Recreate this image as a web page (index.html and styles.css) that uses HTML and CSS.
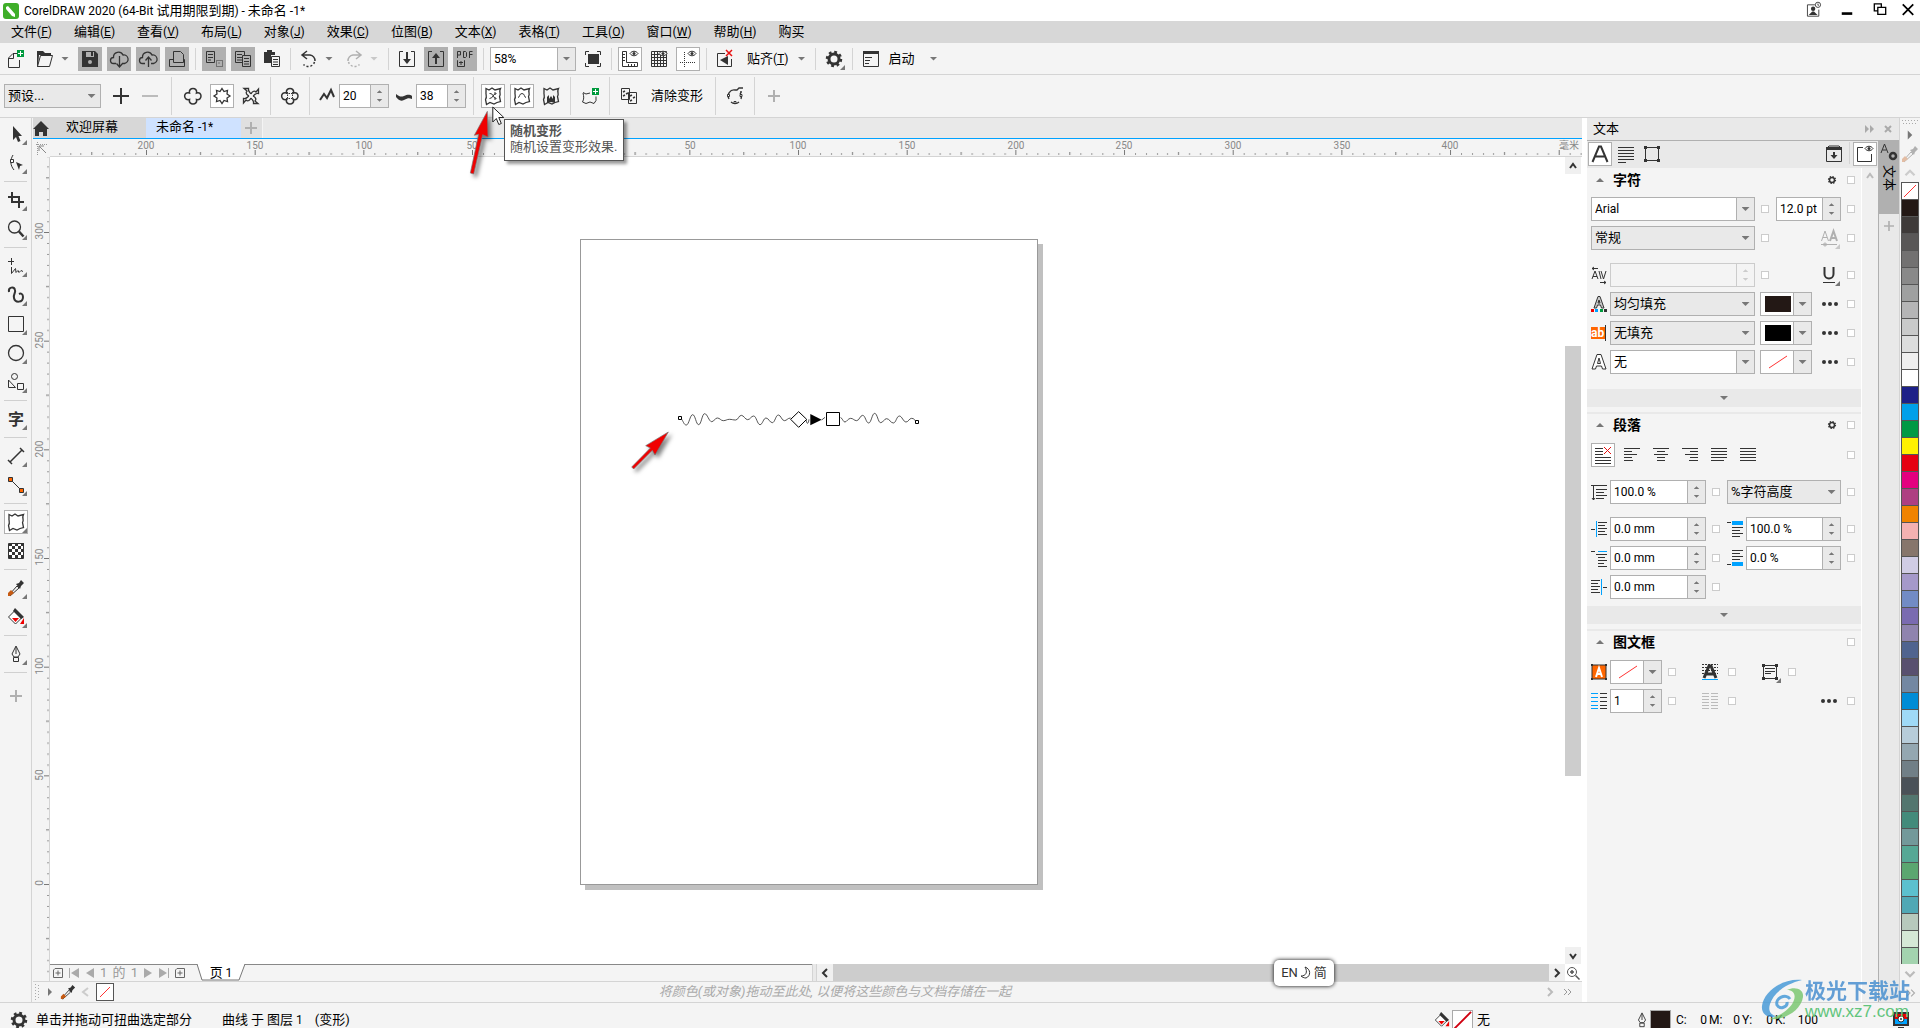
FILE: index.html
```html
<!DOCTYPE html>
<html lang="zh-CN">
<head>
<meta charset="utf-8">
<title>CorelDRAW 2020 - 未命名 -1*</title>
<link rel="stylesheet" href="styles.css">
</head>
<body>
<svg class="sprite" aria-hidden="true">
  <symbol id="fly" viewBox="0 0 24 24"><path d="M23 18v5h-5z" fill="#777"/></symbol>
  <symbol id="new" viewBox="0 0 24 24"><path d="M14 6.500H9L4.500 11v9.500h11V13M9.500 7v4.500H5" class="s"/><path d="M13 3h7v7h-7z" fill="#009a3d"/><path d="M16.500 4v5M14 6.500h5" stroke="#fff"/></symbol>
  <symbol id="open" viewBox="0 0 24 24"><path d="M4 4h6l2 2h6v3h-1V8H6L5 20H4z" class="f"/><path d="M7.500 8.500h12l-3 11h-12z" class="s" fill="#f4f4f4"/></symbol>
  <symbol id="save" viewBox="0 0 24 24"><path d="M4 4h13l3 3v13H4z" class="f"/><path d="M8 5h8v5H8z" fill="#b0b0b0"/><path d="M13 5h2v4h-2z" class="f"/><circle cx="12" cy="15" r="2" fill="#b0b0b0"/></symbol>
  <symbol id="clouddown" viewBox="0 0 24 24"><path d="M9 16.500H6.500a3 3 0 0 1 0-6 5 5 0 0 1 9.500-2.500 4 4 0 0 1 1.500 8.500H15M12.500 9v10M9.500 16.500l3 3.500 3-3.500" class="s" stroke-width="1.300"/></symbol>
  <symbol id="cloudup" viewBox="0 0 24 24"><path d="M9 16.500H6.500a3 3 0 0 1 0-6 5 5 0 0 1 9.500-2.500 4 4 0 0 1 1.500 8.500H15M12.500 20v-9M9.500 13.500l3-3.500 3 3.500" class="s" stroke-width="1.300"/></symbol>
  <symbol id="print" viewBox="0 0 24 24"><path d="M8.500 14V4.500h7l3 3V14M4.500 12.500h4v3h10v-3h1v7h-15z" class="s"/></symbol>
  <symbol id="cut" viewBox="0 0 24 24"><path d="M4.500 4.500h8v11h-8zM6 7.500h5M6 10.500h5M6 13h3" class="s"/><path d="M14.500 13.500h6v6h-6zM16.500 16h2" class="s" stroke-dasharray="1 1"/></symbol>
  <symbol id="copy" viewBox="0 0 24 24"><path d="M4.500 4.500h9v11h-9zM6 7.500h5M6 10.500h5M6 13h5" class="s"/><path d="M11.500 8.500h8v11h-8z" class="s" fill="#b0b0b0"/><path d="M13 11.500h5M13 14.500h5M13 17h5" class="s"/></symbol>
  <symbol id="paste" viewBox="0 0 24 24"><path d="M4 5h3V3h5v2h3v3h-4v8H4z" class="f"/><path d="M11.500 9.500h8v10h-8zM13 12.500h5M13 15h5M13 17.500h5" class="s" fill="#f4f4f4"/></symbol>
  <symbol id="undo" viewBox="0 0 24 24"><path d="M10 4L5 8l5 4M5 8h8a6 6 0 0 1 5 6" class="s" stroke-width="1.500"/><path d="M17.500 15a6.500 6.500 0 0 1-11 2.500" class="s" stroke-width="1.500" stroke-dasharray="2 2"/></symbol>
  <symbol id="import" viewBox="0 0 24 24"><path d="M8 4.500H4.500v15h15v-15H16" class="s"/><path d="M12 5v8" class="s2"/><path d="M8 12h8l-4 5z" class="f"/></symbol>
  <symbol id="export" viewBox="0 0 24 24"><path d="M8 4.500H4.500v15h15v-15H16" class="s"/><path d="M12 17V9" class="s2"/><path d="M8 11h8l-4-5z" class="f"/></symbol>
  <symbol id="pdf" viewBox="0 0 24 24"><path d="M4.500 11V4.500h3v3.500h-3M10.500 4.500v6h2l1-1v-4l-1-1zM19.500 4.500h-3V11M16.500 7.500h3" class="s"/><path d="M5 13.500h-.5v6h7v-6H11M8 18v-4M6 15.500h4" class="s"/></symbol>
  <symbol id="full" viewBox="0 0 24 24"><path d="M7 7h11v10H7z" class="f"/><path d="M4.500 8V4.500H8M16 4.500h3.500V8M4.500 16v3.500H8M16 19.500h3.500V16" class="s"/></symbol>
  <symbol id="eye" viewBox="0 0 24 24"><path d="M12 6.500c2-3 6-3 8 0-2 3-6 3-8 0z" class="s" fill="#fff"/><circle cx="16" cy="6.500" r="1.500" class="f"/></symbol>
  <symbol id="rulers" viewBox="0 0 24 24"><path d="M4.500 4.500h4v11h11v4h-15zM5 7.500h2M5 10.500h2M5 13.500h2M10.500 19v-2M13.500 19v-2M16.500 19v-2" class="s"/><use href="#eye"/></symbol>
  <symbol id="grid" viewBox="0 0 24 24"><path d="M4.500 4.500h15v15h-15zM7.500 4v16M10.500 4v16M13.500 4v16M16.500 4v16M4 7.500h16M4 10.500h16M4 13.500h16M4 16.500h16" class="s"/><use href="#eye"/></symbol>
  <symbol id="guides" viewBox="0 0 24 24"><path d="M8.500 5v16M4 15.500h16" class="s" stroke-dasharray="1 1"/><use href="#eye"/></symbol>
  <symbol id="snap" viewBox="0 0 24 24"><path d="M12 6.500H4.500v13h14V12" class="s"/><path d="M15 9v9l-8-5z" class="f"/><path d="M13 3l6 6M19 3l-6 6" stroke="#e81010" stroke-width="1.500"/></symbol>
  <symbol id="gear" viewBox="0 0 24 24"><circle cx="12" cy="12" r="5" fill="none" stroke="#333" stroke-width="3"/><circle cx="12" cy="12" r="7" fill="none" stroke="#333" stroke-width="2.500" stroke-dasharray="2.750 2.750"/></symbol>
  <symbol id="launch" viewBox="0 0 24 24"><path d="M4.500 4.500h15v15h-15zM6 10.500h7M6 13.500h5M6 16.500h4" class="s"/><path d="M4 4h16v3H4z" class="f"/></symbol>
  <symbol id="plus" viewBox="0 0 24 24"><path d="M12 4v16M4 12h16" class="s2"/></symbol>
  <symbol id="minus" viewBox="0 0 24 24"><path d="M4 12h16" stroke="#bbb" stroke-width="2"/></symbol>
  <symbol id="plusg" viewBox="0 0 24 24"><path d="M12 6v12M6 12h12" stroke="#b0b0b0" stroke-width="2"/></symbol>
  <symbol id="clover" viewBox="0 0 24 24"><path d="M8.500 9C7 3 17 3 15.500 9c6-2 6 8 0 6.500 1.500 6-8.500 6-7 0C2 17 2 7 8.500 9z" class="s" stroke-width="1.500"/></symbol>
  <symbol id="zip" viewBox="0 0 24 24"><path d="M12 4.500l2 3 3.500-1-.5 3.500 3 2-3 2 .5 3.500-3.500-1-2 3-2-3-3.500 1 .5-3.500-3-2 3-2L6.500 6.500l3.500 1z" class="s" stroke-width="1.300"/></symbol>
  <symbol id="twist" viewBox="0 0 24 24"><g class="s" stroke-width="1.300"><path d="M12 10C11 8 9 8 9.500 4.500H5L8 7C6 9 8 11 10 12"/><path d="M12 10C11 8 9 8 9.500 4.500H5L8 7C6 9 8 11 10 12" transform="rotate(90 12 12)"/><path d="M12 10C11 8 9 8 9.500 4.500H5L8 7C6 9 8 11 10 12" transform="rotate(180 12 12)"/><path d="M12 10C11 8 9 8 9.500 4.500H5L8 7C6 9 8 11 10 12" transform="rotate(270 12 12)"/></g></symbol>
  <symbol id="centre" viewBox="0 0 24 24"><use href="#clover"/><path d="M8 9.500h8M8 14.500h8M9.500 8v8M14.500 8v8" class="s" stroke-dasharray="1.500 1"/></symbol>
  <symbol id="amp" viewBox="0 0 16 24"><path d="M1 16l4-6 3 4 4-8 3 7" class="s2"/></symbol>
  <symbol id="freq" viewBox="0 0 16 24"><path d="M0 10c4 3 5 3 8 2s5-2 8 0v3c-3-1-4-1-8 1S2 15 0 13z" class="f"/></symbol>
  <symbol id="blob" viewBox="0 0 24 24"><path d="M5 4.500l3 1.500 3-2 3 2 5.500-1.500c-2 4 1 5-1 8l1 5-3.500 1-3 1.500-4-1.500-3.500 2-1-5c2-3 0-5 .5-7z" class="s" stroke-width="1.300"/></symbol>
  <symbol id="random" viewBox="0 0 24 24"><use href="#blob"/><path d="M8.500 9.500c5 0 3 5 7 5M8.500 14.500c4 0 3-5 7-5M14 8v3M14 13v3" class="s"/></symbol>
  <symbol id="smooth" viewBox="0 0 24 24"><use href="#blob"/><path d="M8 13.500c2 0 1-4 4-4s2 4 4 4" class="s"/></symbol>
  <symbol id="local" viewBox="0 0 24 24"><use href="#blob"/><path d="M8 19v-6l2-2v4l2-3 2 3v-4l2 2v6l-4-1z" class="f"/></symbol>
  <symbol id="addblob" viewBox="0 0 24 24"><path d="M5 8.500l3 1.500 4-1M5 9c1 4 1 6-.5 9l3.500 1.500 4-1.500 4 1.500 2-3v-4" class="s"/><path d="M14 4h7v7h-7z" fill="#009a3d"/><path d="M17.500 5v5M15 7.500h5" stroke="#fff"/></symbol>
  <symbol id="copyfx" viewBox="0 0 24 24"><path d="M4.500 4.500h8v11h-8zM11.500 8.500h8v11h-8z" class="s" fill="#f4f4f4"/><path d="M6 8l2-1M9 10l2-1M6 12l2-1M13 12l2-1M16 14l2-1M13 17l2-1" class="s" stroke-width="1.500"/></symbol>
  <symbol id="curves" viewBox="0 0 24 24"><path d="M12 6a6 6 0 0 0-6 9M8 18a6 6 0 0 0 8 0M18 15a6 6 0 0 0-1-6M11 6h3l2-2h4M17 8h2" class="s" stroke-width="1.300"/><path d="M4.500 10.500h2v2h-2zM11 17.500h2v2h-2zM17 10.500h2v2h-2z" class="s" fill="#fff"/></symbol>
  <symbol id="pick" viewBox="0 0 24 24"><path d="M9 4v14l3-3 2 5 2.500-1-2-5H18z" class="f"/></symbol>
  <symbol id="shape" viewBox="0 0 24 24"><path d="M9 4c-3 5-3 10 1 15" class="s"/><path d="M6.500 8.500h3v3h-3z" class="s" fill="#fff"/><path d="M12 11l7 3-3 1-1 4z" class="f"/></symbol>
  <symbol id="crop" viewBox="0 0 24 24"><path d="M8 4v10h11M4 9h11v11M11 14h9" class="s2"/></symbol>
  <symbol id="zoom" viewBox="0 0 24 24"><circle cx="10.500" cy="10" r="6" class="s" stroke-width="1.300"/><path d="M15 14.500l4.500 5" stroke="#333" stroke-width="2.500"/></symbol>
  <symbol id="free" viewBox="0 0 24 24"><path d="M4 7.500h6M7.500 4v7M7.500 13v6.500l4-5 .5 4 2-2 1 2 2-2 2 1" class="s"/></symbol>
  <symbol id="art" viewBox="0 0 24 24"><path d="M5 9c-1-5 5-6 6-2 1 3-2 4-1 8 1 5 9 5 9-1 0-3-2-4-4-3" class="s2"/></symbol>
  <symbol id="rect" viewBox="0 0 24 24"><path d="M4.500 4.500h15v15h-15z" class="s"/></symbol>
  <symbol id="oval" viewBox="0 0 24 24"><circle cx="12" cy="12" r="7.500" class="s" stroke-width="1.300"/></symbol>
  <symbol id="shapes" viewBox="0 0 24 24"><circle cx="10.500" cy="6.500" r="3" class="s"/><path d="M4.500 10v7.500h7zM13.500 13.500h6v6h-6z" class="s"/></symbol>
  <symbol id="dim" viewBox="0 0 24 24"><path d="M6 18L18 6M4 16l4 4M16 4l4 4" class="s" stroke-width="1.500"/></symbol>
  <symbol id="connect" viewBox="0 0 24 24"><path d="M6 6l12 12" class="s"/><path d="M4.500 4.500h4v4h-4zM15.500 15.500h4v4h-4z" fill="#ff6600" stroke="#333"/></symbol>
  <symbol id="checker" viewBox="0 0 24 24"><path d="M4.500 4.500h15v15h-15z" class="s" fill="#fff"/><path d="M6.500 4v16M12.500 4v16" stroke="#333" stroke-width="3" stroke-dasharray="3 3"/><path d="M9.500 7v13M15.500 7v13M18.500 4v16" stroke="#333" stroke-width="3" stroke-dasharray="3 3"/></symbol>
  <symbol id="dropper" viewBox="0 0 24 24"><path d="M5 19l8-9 2 2-9 8z" class="s"/><path d="M4 17l3-3 3 3-4 3H4z" fill="#c65a12"/><path d="M12 8l3-1 2-3 3 3-3 3-1 3z" class="f"/></symbol>
  <symbol id="bucket" viewBox="0 0 24 24"><path d="M11 5.500L4.500 12l7 7 7-7z" class="s" fill="#fff"/><path d="M11 3l9 9-3 2-8-8z" class="f"/><path d="M8 13h7l-3.500 4z" fill="#e00"/><path d="M20 13v6h-4z" fill="#e00"/></symbol>
  <symbol id="pen" viewBox="0 0 24 24"><path d="M12 4l-4 8 2 3h4l2-3zM9.500 15.500h5v4h-5zM12 5v7" class="s"/></symbol>
  <symbol id="account" viewBox="0 0 24 24"><path d="M13 5.500H4.500v13h13V11" class="s"/><circle cx="11" cy="10" r="2.500" class="f"/><path d="M6 17l4-4h2l4 4z" class="f"/><circle cx="16.500" cy="5.500" r="3" class="s"/><path d="M16.500 4v2h1" class="s"/></symbol>
  <symbol id="textA" viewBox="0 0 24 24"><path d="M4.500 20L11 4.500h2L19.500 20M7 14.500h10" class="s2"/></symbol>
  <symbol id="lines" viewBox="0 0 24 24"><path d="M4 5.500h16M4 8.500h16M4 11.500h16M4 14.500h16M4 17.500h16" class="s"/><path d="M4 20.500h8" class="s"/></symbol>
  <symbol id="frame" viewBox="0 0 24 24"><path d="M5.500 5.500h13v13h-13z" class="s"/><path d="M4 4h3v3H4zM17 4h3v3h-3zM4 17h3v3H4zM17 17h3v3h-3z" class="f"/></symbol>
  <symbol id="dock" viewBox="0 0 24 24"><path d="M4.500 8v11.500h15V8M4 7l3-3h10l3 3z" class="s"/><path d="M4 5h16v3H4z" class="f"/><path d="M12 10v4" class="s2"/><path d="M8.500 13h7L12 17z" class="f"/></symbol>
  <symbol id="panel" viewBox="0 0 24 24"><path d="M10 5.500H4.500v14h14V12" class="s"/><use href="#eye"/></symbol>
  <symbol id="AA" viewBox="0 0 24 24"><path d="M4.500 15L8 5l3.500 10M6 11.500h4" class="s"/><path d="M13 15l3.500-10L20 15M14.500 12h4" class="s2"/><path d="M4 18.500h16" class="s"/><circle cx="8" cy="18.500" r="1.500" class="s"/></symbol>
  <symbol id="U" viewBox="0 0 24 24"><path d="M7.500 4v7c0 6 9 6 9 0V4" class="s2"/><path d="M6 19.500h12" class="s"/></symbol>
  <symbol id="kern" viewBox="0 0 16 24"><path d="M1 5.500h6M3 4L1 5.500 3 7M1 16l3-8 3 8M2 13.500h4M8 8l2 8M10 8l2.500 8 2.500-8M9 19.500h6M13 18l2 1.500L13 21" class="s"/></symbol>
  <symbol id="Ac" viewBox="0 0 16 24"><path d="M3 16L7 4.500h2L13 16h-2.500l-1-3h-3l-1 3zM7 11h2L8 8z" class="s" fill="#ccc"/><path d="M0 17h3v3H0z" fill="#e00"/><path d="M4 17h3v3H4z" fill="#00a2ff"/><path d="M9 17h3v3H9z" fill="#009a3d"/><path d="M13 17h3v3h-3z" class="f"/></symbol>
  <symbol id="ab" viewBox="0 0 16 24"><path d="M0 6h14v12H0z" fill="#ff6600"/><path d="M14.500 4v16" class="s"/><text x="0" y="16" font-size="12" font-weight="bold" fill="#fff">ab</text></symbol>
  <symbol id="Ao" viewBox="0 0 16 24"><path d="M1 19L6 4.500h4L15 19h-3.500l-1-3h-5l-1 3zM6.500 13.500h3L8 8z" class="s" fill="#fff"/></symbol>
  <symbol id="more" viewBox="0 0 24 24"><circle cx="6" cy="12" r="2" class="f"/><circle cx="12" cy="12" r="2" class="f"/><circle cx="18" cy="12" r="2" class="f"/></symbol>
  <symbol id="noal" viewBox="0 0 24 24"><path d="M4 5.500h8M4 8.500h8M4 11.500h8M4 14.500h16M4 17.500h16M4 20.500h16" class="s"/><path d="M13 4l7 7M20 4l-7 7" stroke="#e81010"/></symbol>
  <symbol id="al" viewBox="0 0 24 24"><path d="M4 5.500h16M4 8.500h8M4 11.500h13M4 14.500h8M4 17.500h9" class="s"/></symbol>
  <symbol id="ac" viewBox="0 0 24 24"><path d="M4 5.500h16M8 8.500h8M5 11.500h14M8 14.500h8M8 17.500h8" class="s"/></symbol>
  <symbol id="ar" viewBox="0 0 24 24"><path d="M4 5.500h16M12 8.500h8M7 11.500h13M12 14.500h8M11 17.500h9" class="s"/></symbol>
  <symbol id="aj" viewBox="0 0 24 24"><path d="M4 5.500h16M4 8.500h16M4 11.500h16M4 14.500h16M4 17.500h13" class="s"/></symbol>
  <symbol id="af" viewBox="0 0 24 24"><path d="M4 5.500h16M4 8.500h16M4 11.500h16M4 14.500h16M4 17.500h16" class="s"/></symbol>
  <symbol id="lead" viewBox="0 0 16 24"><path d="M2.500 5v15M0 5.500h16M1 18l1.500 2L4 18M5 9.500h11M5 12.500h8M5 15.500h11M5 18.500h8" class="s"/></symbol>
  <symbol id="indl" viewBox="0 0 16 24"><path d="M0 12.500h4M7 5.500h9M7 8.500h7M7 11.500h9M7 14.500h7M7 17.500h9" class="s"/><path d="M5.500 4v16" stroke="#00a2ff"/></symbol>
  <symbol id="indf" viewBox="0 0 16 24"><path d="M0 5.500h4M5 8.500h11M7 11.500h7M7 14.500h9M7 17.500h6M7 20.500h9" class="s"/><path d="M7 5.500h9" stroke="#00a2ff"/></symbol>
  <symbol id="indr" viewBox="0 0 16 24"><path d="M12 12.500h4M0 5.500h9M0 8.500h7M0 11.500h9M0 14.500h7M0 17.500h9" class="s"/><path d="M10.500 4v16" stroke="#00a2ff"/></symbol>
  <symbol id="bef" viewBox="0 0 16 24"><path d="M0 5.500h4M5 10.500h11M5 13.500h8M5 16.500h11M5 19.500h8" class="s"/><path d="M5 4h11v4H5z" fill="#00a2ff"/></symbol>
  <symbol id="aft" viewBox="0 0 16 24"><path d="M0 18.500h4M5 4.500h11M5 7.500h8M5 10.500h11M5 13.500h8" class="s"/><path d="M5 16h11v4H5z" fill="#00a2ff"/></symbol>
  <symbol id="Af" viewBox="0 0 16 24"><path d="M1 5h14v14H1z" fill="#ff6600" stroke="#333"/><path d="M5 17L8 8l3 9M6 14h4" fill="none" stroke="#fff" stroke-width="2"/><path d="M0 4h2v2H0zM14 4h2v2h-2zM0 18h2v2H0zM14 18h2v2h-2z" class="f"/></symbol>
  <symbol id="cols" viewBox="0 0 16 24"><path d="M9 4.500h7M9 8.500h7M9 12.500h7M9 16.500h7M9 19.500h7" class="s"/><path d="M0 4.500h7M0 8.500h7M0 12.500h7M0 16.500h7M0 19.500h7" stroke="#00a2ff"/></symbol>
  <symbol id="Ab" viewBox="0 0 24 24"><path d="M6 18L11 6h2l5 12M8 14h8" class="s" stroke-width="3"/><path d="M4 4.500h16M4 7.500h16M4 10.500h16M4 13.500h16" class="s" stroke-dasharray="2 1"/><path d="M4 19.500h16" stroke="#00a2ff"/></symbol>
  <symbol id="cols2" viewBox="0 0 24 24"><path d="M4 4.500h7M4 7.500h7M4 10.500h7M4 13.500h7M4 16.500h7M4 19.500h7M13 4.500h7M13 7.500h7M13 10.500h7M13 13.500h7M13 16.500h7M13 19.500h7" stroke="#bbb"/></symbol>
  <symbol id="ftop" viewBox="0 0 24 24"><use href="#frame"/><path d="M7 8.500h10M7 11.500h10M7 13.500h6" class="s"/></symbol>
  <symbol id="addpage" viewBox="0 0 16 16"><path d="M5 3.500h7.500v9h-9V5zM8 5.500v5M5.500 8h5" fill="none" stroke="#666"/></symbol>
</svg>

<div class="app">
  <header class="title">
    <svg class="logo" viewBox="0 0 16 16"><rect width="16" height="16" rx="3" fill="#3fae29"/><path d="M3 4l2-1 7 8v3l-3-1L3 6z" fill="#fff"/></svg>
    <h1>CorelDRAW 2020 (64-Bit <span class="zh">试用期限到期</span>) - <span class="zh">未命名</span> -1*</h1>
    <button class="win" aria-label="帐户"><svg><use href="#account"/></svg></button>
    <button class="win" aria-label="最小化"><svg viewBox="0 0 24 24"><path d="M6 15.500h12" stroke="#000" stroke-width="3"/></svg></button>
    <button class="win" aria-label="还原"><svg viewBox="0 0 24 24"><path d="M9 12.500H5.500v-8h8V8M9.500 8.500h9v8h-9z" fill="none" stroke="#000" stroke-width="1.500"/></svg></button>
    <button class="win" aria-label="关闭"><svg viewBox="0 0 24 24"><path d="M6 5l12 12M18 5L6 17" stroke="#000" stroke-width="2"/></svg></button>
  </header>

  <nav class="menu">
    <button><span class="zh">文件</span>(<u>F</u>)</button><button><span class="zh">编辑</span>(<u>E</u>)</button><button><span class="zh">查看</span>(<u>V</u>)</button><button><span class="zh">布局</span>(<u>L</u>)</button><button><span class="zh">对象</span>(<u>J</u>)</button><button><span class="zh">效果</span>(<u>C</u>)</button><button><span class="zh">位图</span>(<u>B</u>)</button><button><span class="zh">文本</span>(<u>X</u>)</button><button><span class="zh">表格</span>(<u>T</u>)</button><button><span class="zh">工具</span>(<u>O</u>)</button><button><span class="zh">窗口</span>(<u>W</u>)</button><button><span class="zh">帮助</span>(<u>H</u>)</button><button><span class="zh">购买</span></button>
  </nav>

  <div class="bar standard">
    <button class="b" aria-label="新建"><svg><use href="#new"/></svg></button>
    <span class="split"><button class="b" aria-label="打开"><svg><use href="#open"/></svg></button><button class="caret" aria-label="最近文件"></button></span>
    <button class="b dark" aria-label="保存"><svg><use href="#save"/></svg></button>
    <button class="b dark" aria-label="从云下载"><svg><use href="#clouddown"/></svg></button>
    <button class="b dark" aria-label="上传到云"><svg><use href="#cloudup"/></svg></button>
    <button class="b dark" aria-label="打印"><svg><use href="#print"/></svg></button>
    <i class="sep"></i>
    <button class="b dark" aria-label="剪切"><svg><use href="#cut"/></svg></button>
    <button class="b dark" aria-label="复制"><svg><use href="#copy"/></svg></button>
    <button class="b" aria-label="粘贴"><svg><use href="#paste"/></svg></button>
    <i class="sep"></i>
    <span class="split"><button class="b" aria-label="撤销"><svg><use href="#undo"/></svg></button><button class="caret" aria-label="撤销列表"></button></span>
    <span class="split off"><button class="b flip" aria-label="重做"><svg><use href="#undo"/></svg></button><button class="caret" aria-label="重做列表"></button></span>
    <i class="sep"></i>
    <button class="b" aria-label="导入"><svg><use href="#import"/></svg></button>
    <button class="b dark" aria-label="导出"><svg><use href="#export"/></svg></button>
    <button class="b dark" aria-label="发布为 PDF"><svg><use href="#pdf"/></svg></button>
    <i class="sep"></i>
    <span class="sel edit zoomlevel"><select aria-label="缩放级别"><option>58%</option></select></span>
    <button class="b" aria-label="全屏预览"><svg><use href="#full"/></svg></button>
    <i class="sep"></i>
    <button class="b on" aria-label="显示标尺"><svg><use href="#rulers"/></svg></button>
    <button class="b" aria-label="显示网格"><svg><use href="#grid"/></svg></button>
    <button class="b on" aria-label="显示辅助线"><svg><use href="#guides"/></svg></button>
    <i class="sep"></i>
    <button class="b" aria-label="关闭贴齐"><svg><use href="#snap"/></svg></button>
    <span class="split"><button class="lbl pad"><span class="zh">贴齐</span>(<u>T</u>)</button><button class="caret" aria-label="贴齐选项"></button></span>
    <i class="sep"></i>
    <button class="b" aria-label="选项"><svg><use href="#gear"/><use href="#fly"/></svg></button>
    <i class="sep"></i>
    <button class="b" aria-label="应用程序启动器"><svg><use href="#launch"/></svg></button>
    <button class="lbl"><span class="zh">启动</span></button>
    <button class="caret" aria-label="启动列表"></button>
  </div>

  <div class="bar property">
    <span class="sel preset"><select class="zh" aria-label="预设"><option>预设...</option></select></span>
    <button class="b" aria-label="添加预设"><svg><use href="#plus"/></svg></button>
    <button class="b" aria-label="删除预设"><svg><use href="#minus"/></svg></button>
    <i class="sep wide"></i>
    <button class="b" aria-label="推拉变形"><svg><use href="#clover"/></svg></button>
    <button class="b on" aria-label="拉链变形"><svg><use href="#zip"/></svg></button>
    <button class="b" aria-label="扭曲变形"><svg><use href="#twist"/></svg></button>
    <i class="sep"></i>
    <button class="b" aria-label="居中变形"><svg><use href="#centre"/></svg></button>
    <i class="sep"></i>
    <label class="field"><svg><use href="#amp"/></svg><span class="spin"><input value="20" aria-label="拉链振幅"><span class="ud"><button aria-label="增加"></button><button aria-label="减少"></button></span></span></label>
    <label class="field"><svg><use href="#freq"/></svg><span class="spin"><input value="38" aria-label="拉链频率"><span class="ud"><button aria-label="增加"></button><button aria-label="减少"></button></span></span></label>
    <i class="sep"></i>
    <button class="b on" aria-label="随机变形"><svg><use href="#random"/></svg></button>
    <button class="b on" aria-label="平滑变形"><svg><use href="#smooth"/></svg></button>
    <button class="b" aria-label="局限变形"><svg><use href="#local"/></svg></button>
    <i class="sep"></i>
    <button class="b" aria-label="添加新的变形"><svg><use href="#addblob"/></svg></button>
    <i class="sep"></i>
    <button class="b" aria-label="复制变形属性"><svg><use href="#copyfx"/></svg></button>
    <button class="lbl pad"><span class="zh">清除变形</span></button>
    <i class="sep"></i>
    <button class="b" aria-label="转换为曲线"><svg><use href="#curves"/></svg></button>
    <i class="sep"></i>
    <button class="b" aria-label="自定义"><svg><use href="#plusg"/></svg></button>
  </div>

  <main class="main">
    <aside class="tools">
      <button class="b" aria-label="选择"><svg><use href="#pick"/><use href="#fly"/></svg></button>
      <button class="b" aria-label="形状"><svg><use href="#shape"/><use href="#fly"/></svg></button>
      <i class="hr"></i>
      <button class="b" aria-label="裁剪"><svg><use href="#crop"/><use href="#fly"/></svg></button>
      <button class="b" aria-label="缩放"><svg><use href="#zoom"/><use href="#fly"/></svg></button>
      <i class="hr"></i>
      <button class="b" aria-label="手绘"><svg><use href="#free"/><use href="#fly"/></svg></button>
      <button class="b" aria-label="艺术笔"><svg><use href="#art"/><use href="#fly"/></svg></button>
      <button class="b" aria-label="矩形"><svg><use href="#rect"/><use href="#fly"/></svg></button>
      <button class="b" aria-label="椭圆形"><svg><use href="#oval"/><use href="#fly"/></svg></button>
      <button class="b" aria-label="多边形"><svg><use href="#shapes"/><use href="#fly"/></svg></button>
      <i class="hr"></i>
      <button class="b" aria-label="文本"><svg viewBox="0 0 24 24"><text x="4" y="18" font-size="16" font-weight="bold" fill="#333">字</text><use href="#fly"/></svg></button>
      <i class="hr"></i>
      <button class="b" aria-label="平行度量"><svg><use href="#dim"/><use href="#fly"/></svg></button>
      <button class="b" aria-label="连接器"><svg><use href="#connect"/><use href="#fly"/></svg></button>
      <i class="hr"></i>
      <button class="b on" aria-label="变形"><svg><use href="#blob"/><use href="#fly"/></svg></button>
      <button class="b" aria-label="透明度"><svg><use href="#checker"/></svg></button>
      <i class="hr"></i>
      <button class="b" aria-label="颜色滴管"><svg><use href="#dropper"/><use href="#fly"/></svg></button>
      <button class="b" aria-label="交互式填充"><svg><use href="#bucket"/><use href="#fly"/></svg></button>
      <i class="hr"></i>
      <button class="b" aria-label="轮廓笔"><svg><use href="#pen"/><use href="#fly"/></svg></button>
      <i class="hr"></i>
      <button class="b last" aria-label="自定义工具箱"><svg><use href="#plusg"/></svg></button>
    </aside>

    <section class="doc">
      <div class="tabs">
        <button class="home" aria-label="主页"><svg viewBox="0 0 16 20"><path d="M8 3l8 8h-2v7h-4v-4H6v4H2v-7H0z" fill="#333"/></svg></button>
        <button class="tab zh">欢迎屏幕</button>
        <button class="tab cur"><span class="zh">未命名</span> -1*</button>
        <button class="tab add" aria-label="新建标签"><svg viewBox="0 0 20 20"><path d="M10 4v12M4 10h12" stroke="#b0b0b0" stroke-width="2"/></svg></button>
      </div>
      <div class="topruler">
        <svg class="corner" viewBox="0 0 17 17"><path d="M4.500 3v14M3 5.500h11" fill="none" stroke="#999" stroke-dasharray="1 1"/><path d="M6 7h5M6 7v5M6 7l7 7" fill="none" stroke="#888"/></svg>
        <svg class="hr-svg">
          <defs>
            <pattern id="ph" x="96" y="0" width="108.670" height="18" patternUnits="userSpaceOnUse">
              <path d="M.5 11v5M54.500 13v3" stroke="#777"/>
              <path d="M11.500 14v2M22.500 14v2M33.500 14v2M43.500 14v2M65.500 14v2M76.500 14v2M87.500 14v2M98.500 14v2" stroke="#999"/>
            </pattern>
          </defs>
          <rect width="100%" height="17" fill="url(#ph)"/>
          <g text-anchor="middle"><text x="96" y="10">200</text><text x="205" y="10">150</text><text x="314" y="10">100</text><text x="422" y="10">50</text><text x="640" y="10">50</text><text x="748" y="10">100</text><text x="857" y="10">150</text><text x="966" y="10">200</text><text x="1074" y="10">250</text><text x="1183" y="10">300</text><text x="1292" y="10">350</text><text x="1400" y="10">400</text><text x="1519" y="10">毫米</text></g>
        </svg>
      </div>
      <div class="work">
        <svg class="vruler">
          <defs>
            <pattern id="pv" x="0" y="75" width="17" height="108.670" patternUnits="userSpaceOnUse">
              <path d="M11 .5h5M13 54.500h3" stroke="#777"/>
              <path d="M14 11.500h2M14 22.500h2M14 33.500h2M14 43.500h2M14 65.500h2M14 76.500h2M14 87.500h2M14 98.500h2" stroke="#999"/>
            </pattern>
          </defs>
          <rect width="17" height="100%" fill="url(#pv)"/>
          <g text-anchor="middle"><text transform="translate(10 74) rotate(-90)">300</text><text transform="translate(10 183) rotate(-90)">250</text><text transform="translate(10 292) rotate(-90)">200</text><text transform="translate(10 400) rotate(-90)">150</text><text transform="translate(10 509) rotate(-90)">100</text><text transform="translate(10 618) rotate(-90)">50</text><text transform="translate(10 726) rotate(-90)">0</text></g>
        </svg>
        <div class="centre">
          <div class="view">
            <div class="canvas">
              <div class="page"></div>
              <svg class="curve" viewBox="345 90 735 60">
                <g fill="none" stroke="#333" stroke-width="2.500">
                  <path d="M363 116C370 122 371 135 379 135S390 104 398 104 408 134 416 134 426 101 434 101 447 125 455 125 464 114 472 114 482 122 490 122 500 118 508 118 519 120 527 120 536 106 544 106 555 119 563 119 573 108 581 108 592 134 600 134 610 114 618 114 629 128 637 128 647 105 655 105 665 122 673 122 682 114 692 114"/>
                  <path d="M738 118C740 134 745 134 747 118M785 120l10-8M842 112C850 120 850 126 855 126S864 115 872 115 882 122 890 122 900 106 908 106 918 129 926 129 936 100 944 100 954 128 962 128 972 116 980 116 992 129 1000 129 1010 108 1018 108 1030 126 1038 126 1047 115 1055 115 1065 122 1070 126"/>
                </g>
                <g fill="#fff" stroke="#000" stroke-width="3"><path d="M355.500 109.500h9v9h-9zM1066.500 121.500h9v9h-9zM716 95l24 23-24 24-24-24zM799.500 97.500h39v39h-39z"/><path d="M751 102l34 17-34 17z" fill="#000" stroke="none"/></g>
              </svg>
              <svg class="arrow2" viewBox="205 145 135 135"><path d="M216 262l56-57-14-7 68-41-40 69-8-14-56 56z" fill="#f00000" stroke="#777" stroke-width="2"/></svg>
            </div>
            <div class="vscroll"><button aria-label="向上滚动"><svg viewBox="0 0 16 16"><path d="M5 10l3-4 3 4" class="s2"/></svg></button><i class="thumb"></i><button aria-label="向下滚动"><svg viewBox="0 0 16 16"><path d="M5 6l3 4 3-4" class="s2"/></svg></button></div>
          </div>
          <div class="navrow">
            <div class="pages">
              <button aria-label="添加页"><svg><use href="#addpage"/></svg></button>
              <button aria-label="第一页"><svg viewBox="0 0 16 16"><path d="M3 3h1v10H3zM13 3v10L5 8z" fill="#aaa"/></svg></button>
              <button aria-label="上一页"><svg viewBox="0 0 16 16"><path d="M12 3v10L4 8z" fill="#aaa"/></svg></button>
              <span class="count"><span>1</span><span>的</span><span>1</span></span>
              <button aria-label="下一页"><svg viewBox="0 0 16 16"><path d="M4 3v10l8-5z" fill="#aaa"/></svg></button>
              <button aria-label="最后一页"><svg viewBox="0 0 16 16"><path d="M12 3h1v10h-1zM3 3v10l8-5z" fill="#aaa"/></svg></button>
              <button aria-label="添加页"><svg><use href="#addpage"/></svg></button>
              <button class="pagetab"><svg viewBox="0 0 50 17" aria-hidden="true"><path d="M1 0l5 16h37L49 0z" fill="#fff"/><path d="M1 0l5 16h37L49 0" fill="none" stroke="#777"/></svg><span><span class="zh">页</span> 1</span></button>
            </div>
            <i class="splitter"></i>
            <div class="hscroll"><button aria-label="向左滚动"><svg viewBox="0 0 16 16"><path d="M10 4L6 8l4 4" class="s2"/></svg></button><i class="thumb"></i><button aria-label="向右滚动"><svg viewBox="0 0 16 16"><path d="M6 4l4 4-4 4" class="s2"/></svg></button></div>
            <button class="navi" aria-label="导航器"><svg viewBox="0 0 16 16"><circle cx="7" cy="7" r="4.500" fill="none" stroke="#555"/><path d="M7 5v4M5 7h4M10.500 10.500l4 4" stroke="#555" stroke-width="1.500"/></svg></button>
          </div>
        </div>
      </div>
      <div class="docpal">
        <svg class="grip" viewBox="0 0 6 16"><path d="M1.500 0v16M4.500 1v16" stroke="#aaa" stroke-dasharray="1 2"/></svg>
        <button aria-label="菜单"><svg viewBox="0 0 16 16"><path d="M6 4l4 4-4 4z" fill="#777"/></svg></button>
        <button aria-label="滴管"><svg viewBox="3 3 18 18"><use href="#dropper" width="24" height="24"/></svg></button>
        <button aria-label="向左"><svg viewBox="0 0 16 16"><path d="M10 4L5 8l5 4" fill="none" stroke="#ccc" stroke-width="2"/></svg></button>
        <button class="nocol" aria-label="无颜色"><svg viewBox="0 0 16 16"><path d="M3 13L13 3" stroke="#f33"/></svg></button>
        <em>将颜色(或对象)拖动至此处, 以便将这些颜色与文档存储在一起</em>
        <button aria-label="向右"><svg viewBox="0 0 16 16"><path d="M6 4l4 4-4 4" fill="none" stroke="#bbb" stroke-width="2"/></svg></button>
        <button aria-label="更多颜色"><svg viewBox="0 0 16 16"><path d="M4 5l3 3-3 3M8 5l3 3-3 3" fill="none" stroke="#999"/></svg></button>
      </div>
    </section>

    <section class="docker">
      <div class="dhead"><h2 class="zh">文本</h2>
        <button aria-label="折叠"><svg viewBox="0 0 16 16"><path d="M4 4l4 4-4 4zM9 4l4 4-4 4z" fill="#aaa"/></svg></button>
        <button aria-label="关闭泊坞窗"><svg viewBox="0 0 16 16"><path d="M5 5l6 6M11 5l-6 6" stroke="#aaa" stroke-width="2"/></svg></button>
      </div>
      <div class="dbody">
        <div class="dleft">
          <div class="dtabs">
            <button class="b on" aria-label="字符"><svg><use href="#textA"/></svg></button>
            <button class="b" aria-label="段落"><svg><use href="#lines"/></svg></button>
            <button class="b" aria-label="图文框"><svg><use href="#frame"/></svg></button>
            <button class="b right" aria-label="停靠"><svg><use href="#dock"/></svg></button>
            <i class="sep"></i>
            <button class="b on" aria-label="显示"><svg><use href="#panel"/></svg></button>
          </div>
          <div class="dscroll">
            <div class="form">
              <div class="head first"><i class="tri"></i><h3>字符</h3><button class="mini" aria-label="字符选项"><svg viewBox="0 0 24 24"><use href="#gear"/></svg></button><input type="checkbox" aria-label="字符样式"></div>
              <div class="row"><span class="sel edit w164"><select aria-label="字体"><option>Arial</option></select></span><input type="checkbox" aria-label="字体样式"><span class="spin w65 end"><input value="12.0 pt" aria-label="字体大小"><span class="ud"><button aria-label="增加"></button><button aria-label="减少"></button></span></span><input type="checkbox" aria-label="大小样式"></div>
              <div class="row"><span class="sel w164"><select class="zh" aria-label="字体样式"><option>常规</option></select></span><input type="checkbox" aria-label="样式"><button class="b end off" aria-label="可变字体"><svg><use href="#AA"/><use href="#fly"/></svg></button><input type="checkbox" aria-label="可变样式"></div>
              <div class="row gapup"><label class="lead"><svg><use href="#kern"/></svg><span class="spin w145 dis"><input disabled aria-label="字距调整"><span class="ud"><button aria-label="增加" disabled></button><button aria-label="减少" disabled></button></span></span></label><input type="checkbox" aria-label="字距样式"><button class="b end" aria-label="下划线"><svg><use href="#U"/><use href="#fly"/></svg></button><input type="checkbox" aria-label="下划线样式"></div>
              <div class="row tight"><label class="lead"><svg><use href="#Ac"/></svg><span class="sel w145"><select class="zh" aria-label="填充类型"><option>均匀填充</option></select></span></label><button class="chip" aria-label="文本颜色"><i class="ink"></i></button><button class="b end" aria-label="填充设置"><svg><use href="#more"/></svg></button><input type="checkbox" aria-label="填充样式"></div>
              <div class="row tight"><label class="lead"><svg><use href="#ab"/></svg><span class="sel w145"><select class="zh" aria-label="背景填充类型"><option>无填充</option></select></span></label><button class="chip" aria-label="背景颜色"><i class="blk"></i></button><button class="b end" aria-label="背景设置"><svg><use href="#more"/></svg></button><input type="checkbox" aria-label="背景样式"></div>
              <div class="row tight"><label class="lead"><svg><use href="#Ao"/></svg><span class="sel edit w145"><select class="zh" aria-label="轮廓宽度"><option>无</option></select></span></label><button class="chip" aria-label="轮廓颜色"><svg viewBox="0 0 26 16"><path d="M4 14L22 2" stroke="#f33"/></svg></button><button class="b end" aria-label="轮廓设置"><svg><use href="#more"/></svg></button><input type="checkbox" aria-label="轮廓样式"></div>
              <button class="expand big" aria-label="展开字符"></button>

              <div class="head"><i class="tri"></i><h3>段落</h3><button class="mini" aria-label="段落选项"><svg viewBox="0 0 24 24"><use href="#gear"/></svg></button><input type="checkbox" aria-label="段落样式"></div>
              <div class="row al"><button class="b on" aria-label="无水平对齐"><svg><use href="#noal"/></svg></button><button class="b" aria-label="左对齐"><svg><use href="#al"/></svg></button><button class="b" aria-label="居中"><svg><use href="#ac"/></svg></button><button class="b" aria-label="右对齐"><svg><use href="#ar"/></svg></button><button class="b" aria-label="两端对齐"><svg><use href="#aj"/></svg></button><button class="b" aria-label="强制两端对齐"><svg><use href="#af"/></svg></button><input type="checkbox" class="end" aria-label="对齐样式"></div>
              <div class="row gapup"><label class="lead"><svg><use href="#lead"/></svg><span class="spin w96"><input value="100.0 %" aria-label="行间距"><span class="ud"><button aria-label="增加"></button><button aria-label="减少"></button></span></span></label><input type="checkbox" aria-label="行距样式"><span class="sel w114 end"><select class="zh" aria-label="垂直间距单位"><option>%字符高度</option></select></span><input type="checkbox" aria-label="单位样式"></div>
              <div class="row gapup"><label class="lead"><svg><use href="#indl"/></svg><span class="spin w96"><input value="0.0 mm" aria-label="左行缩进"><span class="ud"><button aria-label="增加"></button><button aria-label="减少"></button></span></span></label><input type="checkbox" aria-label="左缩进样式"><label class="lead end"><svg><use href="#bef"/></svg><span class="spin w95"><input value="100.0 %" aria-label="段前间距"><span class="ud"><button aria-label="增加"></button><button aria-label="减少"></button></span></span></label><input type="checkbox" aria-label="段前样式"></div>
              <div class="row"><label class="lead"><svg><use href="#indf"/></svg><span class="spin w96"><input value="0.0 mm" aria-label="首行缩进"><span class="ud"><button aria-label="增加"></button><button aria-label="减少"></button></span></span></label><input type="checkbox" aria-label="首行样式"><label class="lead end"><svg><use href="#aft"/></svg><span class="spin w95"><input value="0.0 %" aria-label="段后间距"><span class="ud"><button aria-label="增加"></button><button aria-label="减少"></button></span></span></label><input type="checkbox" aria-label="段后样式"></div>
              <div class="row"><label class="lead"><svg><use href="#indr"/></svg><span class="spin w96"><input value="0.0 mm" aria-label="右行缩进"><span class="ud"><button aria-label="增加"></button><button aria-label="减少"></button></span></span></label><input type="checkbox" aria-label="右缩进样式"></div>
              <button class="expand" aria-label="展开段落"></button>

              <div class="head"><i class="tri"></i><h3>图文框</h3><input type="checkbox" aria-label="图文框样式"></div>
              <div class="row"><label class="lead"><svg><use href="#Af"/></svg><button class="chip" aria-label="背景颜色"><svg viewBox="0 0 26 16"><path d="M4 14L22 2" stroke="#f33"/></svg></button></label><input type="checkbox" aria-label="背景样式"><button class="b sp" aria-label="对齐基线"><svg><use href="#Ab"/></svg></button><input type="checkbox" aria-label="基线样式"><button class="b sp" aria-label="垂直对齐"><svg><use href="#ftop"/><use href="#fly"/></svg></button><input type="checkbox" aria-label="垂直样式"></div>
              <div class="row"><label class="lead"><svg><use href="#cols"/></svg><span class="spin w52"><input value="1" aria-label="栏数"><span class="ud"><button aria-label="增加"></button><button aria-label="减少"></button></span></span></label><input type="checkbox" aria-label="栏样式"><button class="b sp" aria-label="栏宽相等"><svg><use href="#cols2"/></svg></button><input type="checkbox" aria-label="栏宽样式"><button class="b end" aria-label="栏设置"><svg><use href="#more"/></svg></button><input type="checkbox" aria-label="栏设置样式"></div>
            </div>
            <div class="dsb"><svg viewBox="0 0 16 16"><path d="M5 10l3-4 3 4" fill="none" stroke="#bbb" stroke-width="2"/></svg></div>
          </div>
        </div>
        <div class="strip">
          <button class="vtab"><svg viewBox="0 0 20 24"><path d="M2 12l3.500-9L9 12M3.500 9h4" class="s"/><circle cx="14" cy="15" r="3" fill="none" stroke="#333" stroke-width="2.500"/></svg><span>文本</span></button>
          <button class="b" aria-label="快速自定义"><svg><use href="#plusg"/></svg></button>
        </div>
      </div>
    </section>

    <aside class="palette">
      <svg class="griph" viewBox="0 0 16 6"><path d="M0 1.500h16M1 4.500h16" stroke="#aaa" stroke-dasharray="1 2"/></svg>
      <button aria-label="菜单"><svg viewBox="0 0 16 16"><path d="M6 4l4 4-4 4z" fill="#777"/></svg></button>
      <button aria-label="滴管"><svg viewBox="3 3 18 18" class="pale"><use href="#dropper" width="24" height="24"/></svg></button>
      <button aria-label="向上"><svg viewBox="0 0 16 16"><path d="M4 10l4-4 4 4" fill="none" stroke="#ccc" stroke-width="2"/></svg></button>
      <div class="swatches">
        <i><svg viewBox="0 0 16 16"><path d="M2 14L14 2" stroke="#f33"/></svg></i>
        <i style="background:#231815"></i><i style="background:#3e3a39"></i><i style="background:#595757"></i><i style="background:#727171"></i><i style="background:#898989"></i><i style="background:#9fa0a0"></i><i style="background:#b5b5b6"></i><i style="background:#c9caca"></i><i style="background:#dcdddd"></i><i style="background:#efefef"></i><i style="background:#ffffff"></i><i style="background:#1d2088"></i><i style="background:#00a0e9"></i><i style="background:#009944"></i><i style="background:#fff100"></i><i style="background:#e60012"></i><i style="background:#e4007f"></i><i style="background:#ae3f82"></i><i style="background:#f08300"></i><i style="background:#f5b1b1"></i><i style="background:#87766c"></i><i style="background:#d0cce5"></i><i style="background:#a599ca"></i><i style="background:#728bc5"></i><i style="background:#7a6bb0"></i><i style="background:#8f84ae"></i><i style="background:#50648f"></i><i style="background:#58506f"></i><i style="background:#7388a2"></i><i style="background:#008cd6"></i><i style="background:#9fd9f6"></i><i style="background:#b7ccd9"></i><i style="background:#94a7b1"></i><i style="background:#717f87"></i><i style="background:#4a5158"></i><i style="background:#53766f"></i><i style="background:#438b7b"></i><i style="background:#73999a"></i><i style="background:#56a895"></i><i style="background:#5ba670"></i><i style="background:#5cc0ce"></i><i style="background:#50a8b5"></i><i style="background:#b7c9bc"></i><i style="background:#d5e8d6"></i><i style="background:#a3d3af"></i>
      </div>
      <button aria-label="向下"><svg viewBox="0 0 16 16"><path d="M4 6l4 4 4-4" fill="none" stroke="#bbb" stroke-width="2"/></svg></button>
      <button aria-label="更多"><svg viewBox="0 0 16 16"><path d="M5 5l3 3-3 3M9 5l3 3-3 3" fill="none" stroke="#aaa"/></svg></button>
    </aside>
  </main>

  <footer class="status">
    <svg class="sg" viewBox="3 3 18 18"><use href="#gear" width="24" height="24"/></svg>
    <span class="zh hint">单击并拖动可扭曲选定部分</span>
    <span class="obj"><span class="zh">曲线</span> <span class="zh">于</span> <span class="zh">图层</span> 1</span>
    <span class="zh fx">(变形)</span>
    <span class="fill"><svg viewBox="3 3 18 18"><use href="#bucket" width="24" height="24"/></svg><i class="none"><svg viewBox="0 0 20 20"><path d="M1 19L19 1" stroke="#d00010" stroke-width="2"/></svg></i><span class="zh">无</span></span>
    <span class="line"><svg viewBox="3 3 18 18"><use href="#pen" width="24" height="24"/></svg><i class="ink"></i><span class="cmyk"><span><b>C:</b><b>0</b></span><span><b>M:</b><b>0</b></span><span><b>Y:</b><b>0</b></span><span><b>K:</b><b>100</b></span></span></span>
    <svg class="proof" viewBox="0 0 16 16"><path d="M1 1h14v12H1z" fill="#00a2ff" stroke="#333" stroke-width="2"/><path d="M2 2h12v5H2z" fill="#e00"/><circle cx="8" cy="7" r="3" fill="#fff" stroke="#333"/><circle cx="8" cy="7" r="1" fill="#333"/><path d="M5 15.500h6" stroke="#333"/></svg>
  </footer>
</div>

<svg class="arrow1" viewBox="1395 325 90 210"><path d="M1462 335l-39 72 13-3-25 116 10 3 27-118 16 7z" fill="#f00000" stroke="#777" stroke-width="2"/></svg>
<div class="tip"><strong>随机变形</strong><span>随机设置变形效果.</span></div>
<svg class="cursor" viewBox="0 0 13 20"><path d="M.8 1v15l3.500-3.500 2.500 6 2.500-1-2.500-6h5z" fill="#fff" stroke="#222"/></svg>
<div class="ime">EN <svg viewBox="0 0 12 14"><path d="M5 1c6 2 6 9 1 11-2 0-4-1-5-2 5 0 7-4 4-9z" fill="none" stroke="#333"/></svg> <span class="zh">简</span></div>
<div class="mark"><svg viewBox="0 0 44 42"><path d="M41 1C22-1 3 12 1 27c-1 8 6 13 15 10-7-1-9-6-7-12C13 13 25 5 41 1z" fill="#3d95d6" opacity=".8"/><path d="M8 40c14 2 32-8 34-22 1-8-8-11-16-7 6 0 9 4 7 10-3 9-14 16-25 19z" fill="#74c46a" opacity=".8"/><path d="M29 20c-4-6-15-1-13 6 3 5 11 2 10-3" fill="none" stroke="#3d95d6" stroke-width="3" opacity=".8"/></svg><div><strong>极光下载站</strong><span>www.xz7.com</span></div></div>
</body>
</html>
```
FILE: styles.css
```css
* { box-sizing: border-box; }
body {
  margin: 0;
  background: #f4f4f4;
  color: #000;
  font: 12px/16px Roboto, "Noto Sans CJK SC", sans-serif;
  overflow: hidden;
}
.sprite { display: none; }
.s { stroke: #333; }
.s:not([fill]) { fill: none; }
.s2 { fill: none; stroke: #333; stroke-width: 2; }
.f { fill: #333; }
.zh { font-size: 13px; }
h1, h2, h3 { margin: 0; font-weight: normal; font-size: 12px; }
button, input, select { font: inherit; color: inherit; margin: 0; padding: 0; border: 0; border-radius: 0; background: none; }
button.zh, select.zh, h2.zh { font-size: 13px; }
button { display: block; flex: none; }
svg { display: block; flex: none; }
i { font-style: normal; display: block; flex: none; }
.app { display: flex; flex-direction: column; height: 100vh; }

.title { display: flex; align-items: center; height: 21px; flex: none; background: #fff; padding-left: 3px; }
.title h1 { flex: 1; margin-left: 5px; padding-top: 1px; }
.logo { width: 16px; height: 16px; }
.win { width: 24px; margin-left: 9px; }
.win:last-child { margin-left: 4px; }
.win svg { width: 24px; height: 21px; }

.menu { display: flex; align-items: center; gap: 22px; height: 22px; flex: none; background: #d7d7d7; padding-left: 11px; }

.bar { display: flex; align-items: center; gap: 5px; padding: 0 4px; flex: none; border-bottom: 1px solid #d4d4d4; }
.standard { height: 32px; }
.property { height: 43px; }
.b { width: 24px; height: 24px; }
.b svg { width: 24px; height: 24px; }
.b.dark { background: #b0b0b0; }
.b.on { background: #fff; box-shadow: inset 0 0 0 1px #b0b0b0; }
.flip svg { transform: scaleX(-1); }
.off { opacity: .35; }
.split { display: flex; align-items: center; }
.caret { width: 16px; height: 24px; }
.caret::after, .sel::after, .expand::after {
  content: ""; display: block; width: 8px; height: 4px; margin: 0 auto;
  background: #777; clip-path: polygon(0 0, 100% 0, 50% 100%);
}
.lbl + .caret { margin-left: 6px; }
.lbl.pad { padding: 0 5px; }
.split .lbl + .caret { margin-left: 0; }
.sep { width: 3px; height: 22px; background: linear-gradient(#d4d4d4, #d4d4d4) center / 1px 100% no-repeat; }
.property .sep { height: 38px; width: 5px; }
.property .sep.wide { width: 9px; }

.sel { display: grid; grid-template-columns: minmax(0, 1fr) 17px; align-items: center; height: 24px; border: 1px solid #b0b0b0; background: #e9e9e9; flex: none; }
.sel select { grid-area: 1 / 1 / 2 / 3; appearance: none; height: 22px; padding: 0 18px 0 3px; width: 100%; }
.sel::after { grid-area: 1 / 2; pointer-events: none; }
.sel.edit { background: linear-gradient(to left, #e9e9e9 17px, #b0b0b0 17px, #b0b0b0 18px, #fff 18px); }
.zoomlevel { width: 86px; }
.preset { width: 97px; margin-right: 3px; }
.field { display: flex; align-items: center; gap: 4px; padding-left: 2px; }
.field svg { width: 16px; height: 24px; }
.field .spin { width: 50px; }

.spin { display: flex; height: 24px; border: 1px solid #b0b0b0; background: #fff; flex: none; }
.spin input { flex: 1; min-width: 0; width: 0; padding-left: 3px; }
.ud { display: flex; flex-direction: column; justify-content: space-evenly; width: 18px; background: #e9e9e9; border-left: 1px solid #b0b0b0; }
.ud button { width: 6px; height: 3px; margin: 0 auto; background: #777; clip-path: polygon(50% 0, 100% 100%, 0 100%); }
.ud button:last-child { clip-path: polygon(0 0, 100% 0, 50% 100%); }
.dis, .dis .ud { background: #f4f4f4; border-color: #ccc; }
.dis .ud button { background: #ccc; }

.main { display: flex; flex: 1; min-height: 0; }
.tools { width: 32px; flex: none; border-right: 1px solid #d4d4d4; padding: 4px 3px 0 4px; display: flex; flex-direction: column; gap: 5px; }
.tools .hr { height: 3px; width: 23px; background: linear-gradient(#d0d0d0, #d0d0d0) center / 100% 1px no-repeat; }
.tools .last { margin-top: 5px; }

.doc { flex: 1; min-width: 0; display: flex; flex-direction: column; padding-left: 1px; }
.tabs { display: flex; height: 20px; flex: none; background: #e9e9e9; }
.home { background: #d7d7d7; width: 17px; }
.home svg { width: 16px; height: 20px; }
.tab { background: #d7d7d7; padding: 0 28px 2px 16px; }
.tab.cur { background: #cfe2ff; padding: 0 28px 2px 10px; }
.tab.add { width: 22px; padding: 0; background: #e0e0e0; border-right: 1px solid #f4f4f4; }
.add svg { width: 20px; height: 20px; }
.topruler { display: flex; height: 19px; flex: none; border-top: 1px solid #00a2ff; }
.corner { width: 17px; height: 17px; }
.hr-svg { flex: 1; min-width: 0; height: 18px; border-bottom: 1px solid #d4d4d4; }
.topruler text, .vruler text { font-size: 10px; fill: #888; }
.work { flex: 1; min-height: 0; display: flex; }
.vruler { width: 17px; height: 100%; border-right: 1px solid #d4d4d4; }
.centre { flex: 1; min-width: 0; display: flex; flex-direction: column; }
.view { flex: 1; min-height: 0; display: flex; }
.canvas { flex: 1; position: relative; overflow: hidden; background: #fff; }
.page { position: absolute; left: 530px; top: 82px; width: 458px; height: 646px; background: #fff; border: 1px solid #999; box-shadow: 5px 5px 0 #c0c0c0; }
.curve { position: absolute; left: 625px; top: 253px; width: 245px; height: 20px; }
.arrow2 { position: absolute; left: 578px; top: 271px; width: 45px; height: 45px; }
.arrow1, .arrow2 { filter: drop-shadow(3px 3px 2px rgba(0, 0, 0, .5)); }
.vscroll { width: 17px; display: flex; flex-direction: column; background: #fff; }
.vscroll button { height: 17px; width: 16px; background: #f0f0f0; }
.vscroll svg { width: 16px; height: 16px; }
.vscroll .thumb { width: 16px; flex: 430 0 0; background: #cdcdcd; margin: 172px 0 171px; }
.navrow { display: flex; height: 17px; flex: none; }
.pages { flex: 762 0 0; min-width: 0; display: flex; align-items: center; border-top: 1px solid #888; }
.navrow svg { width: 16px; height: 16px; }
.count { display: flex; justify-content: space-between; color: #999; width: 38px; margin: 0 2px; font-size: 13px; }
.pagetab { display: grid; margin-left: 8px; align-items: center; justify-items: center; }
.pagetab > * { grid-area: 1 / 1; }
.navrow .pagetab svg { width: 50px; height: 17px; margin-top: -1px; }
.splitter { width: 5px; border: solid #d4d4d4; border-width: 0 1px; background: #e9e9e9; }
.hscroll { flex: 748 0 0; display: flex; background: #f0f0f0; }
.hscroll .thumb { flex: 1; background: #cdcdcd; }
.navi { width: 17px; background: #fff; }
.docpal { display: flex; align-items: center; height: 21px; flex: none; border-top: 1px solid #d4d4d4; gap: 2px; padding-right: 6px; }
.docpal svg { width: 16px; height: 16px; }
.docpal .grip { width: 6px; margin-left: 1px; }
.docpal .nocol { border: 1px solid #555; background: #fff; }
.docpal em { flex: 1; text-align: center; font-size: 13px; color: #aaa; padding-left: 14px; }

.docker { width: 317px; flex: none; display: flex; flex-direction: column; border-left: 5px solid #fff; background: #e9e9e9; }
.dhead { display: flex; align-items: center; height: 23px; flex: none; padding-left: 6px; padding-right: 3px; border-bottom: 1px solid #b0b0b0; }
.dhead h2 { flex: 1; }
.dhead svg { width: 16px; height: 16px; margin-left: 3px; }
.dbody { display: flex; flex: 1; min-height: 0; }
.dleft { flex: 1; min-width: 0; display: flex; flex-direction: column; border-right: 1px solid #b0b0b0; }
.dtabs { display: flex; height: 27px; flex: none; gap: 2px; padding: 1px 1px 0; }
.dtabs .right { margin-left: auto; }
.dscroll { display: flex; flex: 1; min-height: 0; }
.form { flex: 1; min-width: 0; background: #f4f4f4; }
.dsb { width: 17px; background: #f0f0f0; border-left: 1px solid #fff; }
.dsb svg { width: 16px; height: 16px; }
.head { display: flex; align-items: center; gap: 6px; height: 24px; border-top: 2px solid #e9e9e9; margin: 5px 0 7px; padding: 0 6px 0 9px; }
.head.first { border: 0; margin: 0 0 5px; }
.head h3 { flex: 1; font-size: 14px; font-weight: bold; margin-left: 3px; }
.tri { width: 8px; height: 4px; background: #777; clip-path: polygon(50% 0, 100% 100%, 0 100%); }
.mini { margin-right: 3px; }
.mini svg { width: 12px; height: 12px; }
.form input[type=checkbox] { appearance: none; width: 8px; height: 8px; border: 1px solid #ccc; background: #fff; flex: none; }
.row { display: flex; align-items: center; gap: 6px; height: 24px; margin-bottom: 5px; padding: 0 6px 0 4px; }
.row.al, .row.tight { gap: 5px; }
.row.gapup { margin-top: 13px; }
.row .end { margin-left: auto; }
.row .sp { margin-left: 16px; }
.lead { display: flex; align-items: center; gap: 3px; }
.lead > svg { width: 16px; height: 24px; }
.w164 { width: 164px; }
.w145 { width: 145px; }
.w114 { width: 114px; }
.w96 { width: 96px; }
.w95 { width: 95px; }
.w65 { width: 65px; }
.w52 { width: 52px; }
.chip { display: grid; grid-template-columns: 33px 17px; align-items: center; justify-items: center; width: 52px; height: 24px; border: 1px solid #b0b0b0; background: linear-gradient(to left, #e9e9e9 17px, #b0b0b0 17px, #b0b0b0 18px, #fff 18px); }
.chip i, .chip svg { width: 26px; height: 16px; }
.chip::after { content: ""; width: 8px; height: 4px; background: #777; clip-path: polygon(0 0, 100% 0, 50% 100%); }
.ink { background: #231815; }
.blk { background: #000; }
.expand { width: 100%; height: 18px; background: #e9e9e9; margin-top: 7px; }
.expand.big { margin-top: 15px; }

.strip { width: 20px; flex: none; }
.vtab { width: 20px; background: #b0b0b0; height: 73px; display: flex; flex-direction: column; align-items: center; }
.vtab svg { width: 20px; height: 24px; }
.vtab span { writing-mode: vertical-rl; text-orientation: sideways; font-size: 13px; }
.strip .b { width: 20px; }
.strip .b svg { width: 20px; }

.palette { width: 21px; flex: none; display: flex; flex-direction: column; align-items: center; border-left: 1px solid #d4d4d4; }
.griph { width: 16px; height: 6px; margin-top: 1px; }
.palette > button svg { width: 18px; height: 18px; }
.palette > button { height: 19px; }
.pale { opacity: .35; }
.swatches { width: 18px; flex: 0 1 auto; min-height: 0; overflow: hidden; border: solid #555; border-width: 1px 1px 0; }
.swatches i { height: 17px; border-bottom: 1px solid #555; background: #fff; }
.swatches svg { width: 16px; height: 16px; }

.status { display: flex; align-items: center; height: 26px; flex: none; border-top: 1px solid #d4d4d4; padding: 9px 11px 0 10px; white-space: nowrap; }
.sg { width: 18px; height: 18px; }
.hint { margin-left: 8px; }
.obj { margin-left: 30px; }
.fx { margin-left: 12px; }
.fill { margin-left: auto; }
.fill, .line { display: flex; align-items: center; }
.fill > svg, .line > svg { width: 16px; height: 18px; }
.fill .none, .line .ink { width: 21px; height: 20px; border: 1px solid #aaa; }
.fill .none { background: #fff; margin: 0 4px 0 2px; }
.none svg { width: 19px; height: 19px; }
.line { margin-left: 144px; }
.cmyk { display: flex; padding-left: 5px; }
.cmyk span { display: flex; justify-content: space-between; width: 33px; padding-right: 2px; }
.cmyk span:last-child { width: 43px; padding-right: 0; }
.cmyk b { font-weight: normal; }
.proof { width: 16px; height: 16px; margin-left: 75px; }

.arrow1 { position: absolute; left: 465px; top: 108px; width: 30px; height: 70px; }
.tip { position: absolute; left: 504px; top: 119px; width: 120px; height: 42px; background: #fff; border: 1px solid #555; box-shadow: 3px 3px 3px rgba(0, 0, 0, .4); padding: 3px 5px; color: #555; font-size: 13px; white-space: nowrap; }
.tip strong, .tip span { display: block; }
.cursor { position: absolute; left: 492px; top: 106px; width: 13px; height: 20px; }
.ime { position: absolute; left: 1274px; top: 960px; width: 60px; height: 26px; border-radius: 5px; background: #fff; box-shadow: 0 0 4px #000; display: flex; align-items: center; justify-content: center; gap: 2px; font-size: 13px; color: #333; }
.ime svg { width: 12px; height: 14px; }
.mark { position: absolute; right: 10px; bottom: 7px; display: flex; }
.mark svg { width: 44px; height: 42px; }
.mark strong { display: block; font-size: 21px; line-height: 24px; color: #4a90d0; opacity: .85; }
.mark span { display: block; font: 17px/18px "Liberation Sans", sans-serif; color: #62c47c; }
```
